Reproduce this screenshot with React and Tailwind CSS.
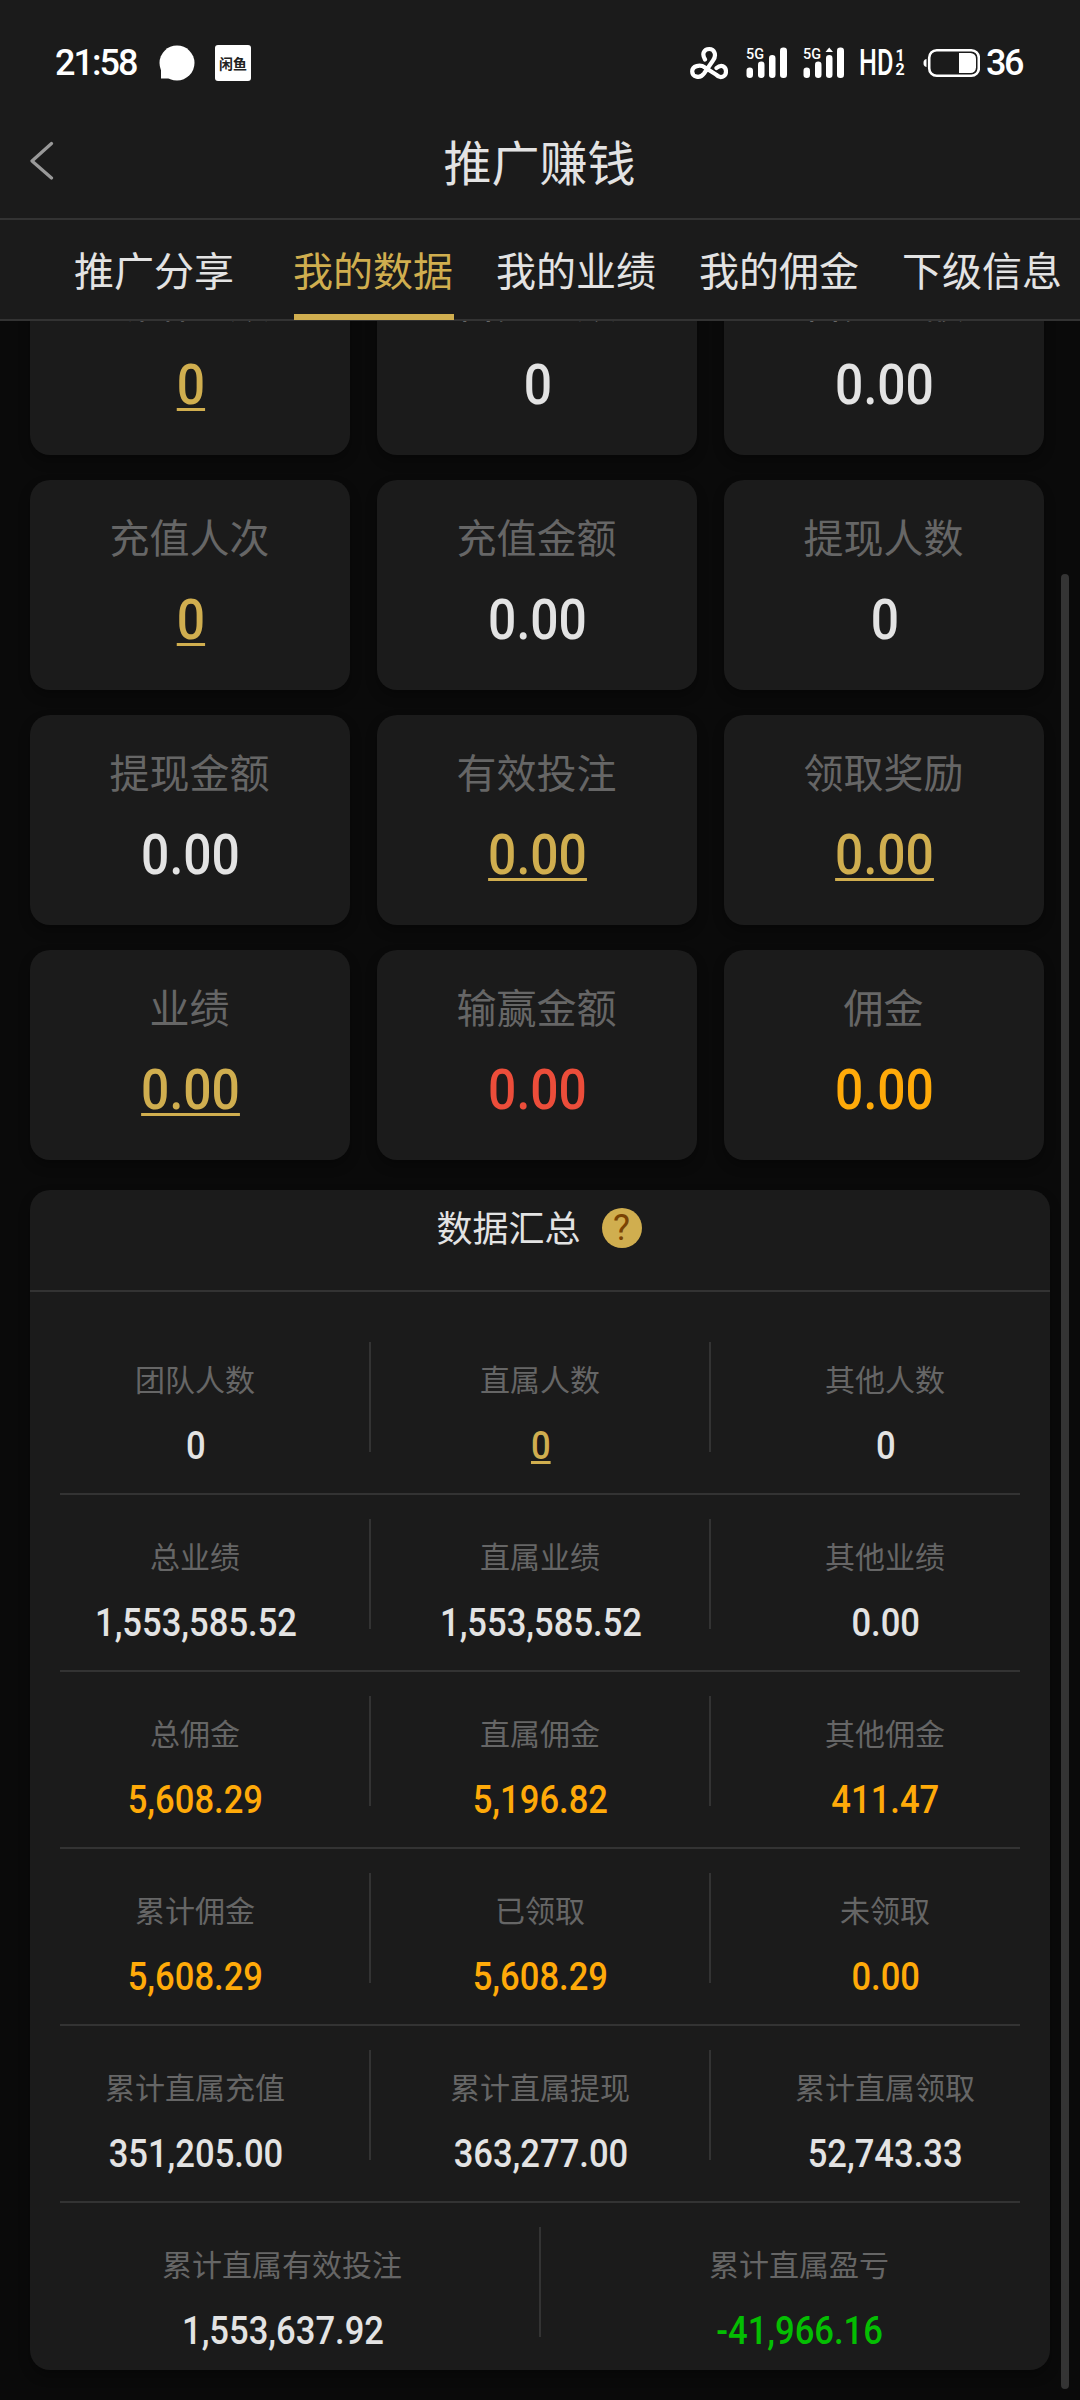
const tabs = ["推广分享", "我的数据", "我的业绩", "我的佣金", "下级信息"];

const colors = {
  plain: "text-[#e3e3e3]",
  link: "text-[#d0ae4f] underline decoration-[3px]",
  red: "text-[#ec4d3a]",
  orange: "text-[#ffaa09]",
  green: "text-[#04be02]",
};

const cards = [
  { label: "新增人数", value: "0", tone: "link" },
  { label: "首充人数", value: "0" },
  { label: "首充金额", value: "0.00" },
  { label: "充值人次", value: "0", tone: "link" },
  { label: "充值金额", value: "0.00" },
  { label: "提现人数", value: "0" },
  { label: "提现金额", value: "0.00" },
  { label: "有效投注", value: "0.00", tone: "link" },
  { label: "领取奖励", value: "0.00", tone: "link" },
  { label: "业绩", value: "0.00", tone: "link" },
  { label: "输赢金额", value: "0.00", tone: "red" },
  { label: "佣金", value: "0.00", tone: "orange" },
];

const summary = [
  [
    { label: "团队人数", value: "0" },
    { label: "直属人数", value: "0", tone: "link" },
    { label: "其他人数", value: "0" },
  ],
  [
    { label: "总业绩", value: "1,553,585.52" },
    { label: "直属业绩", value: "1,553,585.52" },
    { label: "其他业绩", value: "0.00" },
  ],
  [
    { label: "总佣金", value: "5,608.29", tone: "orange" },
    { label: "直属佣金", value: "5,196.82", tone: "orange" },
    { label: "其他佣金", value: "411.47", tone: "orange" },
  ],
  [
    { label: "累计佣金", value: "5,608.29", tone: "orange" },
    { label: "已领取", value: "5,608.29", tone: "orange" },
    { label: "未领取", value: "0.00", tone: "orange" },
  ],
  [
    { label: "累计直属充值", value: "351,205.00" },
    { label: "累计直属提现", value: "363,277.00" },
    { label: "累计直属领取", value: "52,743.33" },
  ],
];

const totals = [
  { label: "累计直属有效投注", value: "1,553,637.92" },
  { label: "累计直属盈亏", value: "-41,966.16", tone: "green" },
];

function Signal({ dual }) {
  return (
    <svg className="overflow-visible" width="41" height="32" viewBox="0 0 41 32" fill="#fff">
      <text x="0" y="11.5" fontSize="15" fontWeight="500" fontFamily="Roboto, sans-serif" textLength="18" lengthAdjust="spacingAndGlyphs">
        5G
      </text>
      <rect x="0.5" y="20.5" width="6.5" height="10.5" rx="3.2" />
      <rect x="12" y="14.5" width="6.5" height="16.5" rx="3.2" />
      <rect x="23" y="8" width="6.5" height="23" rx="3.2" />
      <rect x="34" y="0.5" width="7" height="30.5" rx="3.2" />
      {dual && <path d="M22.5 5 26.2 0.5 30 5z" />}
    </svg>
  );
}

function StatusBar() {
  return (
    <div className="flex h-[102px] items-center pt-6 text-white font-['Roboto',sans-serif]">
      <span className="ml-[55px] w-[82px] text-[36px] font-medium tracking-[-2px]">21:58</span>
      <svg className="ml-[22px]" width="36" height="36" viewBox="0 0 36 36" fill="#fff">
        <circle cx="18" cy="18" r="17.5" />
        <path d="M2 20v13.5h16z" />
      </svg>
      <span className="ml-5 flex h-9 w-9 items-center justify-center rounded-[3px] bg-white text-[14px] font-bold text-[#222] font-['Noto_Sans_CJK_SC',sans-serif]">
        闲鱼
      </span>

      <svg
        className="ml-auto"
        width="38"
        height="34"
        viewBox="0 0 38 34"
        fill="none"
        stroke="#fff"
        strokeWidth="4.2"
        strokeLinecap="round"
      >
        <path d="M15 13.5C11.5 8 14 3 19.2 3S27 9 23 14.5L14 27.5C10 33 2.2 31 2.2 25.5S10 18 15 21.5L26 28.5C30 33 36 31 36 25.5S31 18 26.5 22" />
      </svg>
      <div className="ml-[18px]"><Signal /></div>
      <div className="ml-4"><Signal dual /></div>
      <span className="ml-[15px] w-[34px] text-[36px] font-medium">
        <span className="inline-block origin-left scale-x-[0.7]">HD</span>
      </span>
      <span className="ml-[2px] flex w-[10px] flex-col items-center text-[16px] font-bold leading-[14px]">
        <span>1</span>
        <span>2</span>
      </span>
      <svg className="ml-[18px]" width="57" height="30" viewBox="0 0 57 30" fill="none">
        <path d="M3.5 11v8C1 18.5 0.5 17 0.5 15s0.5-3.500 3-4z" fill="#fff" />
        <rect x="6.2" y="2.2" width="49.6" height="25.6" rx="7.5" stroke="#fff" strokeWidth="2.6" />
        <path d="M36 5h11.5a5.5 5.5 0 0 1 5.5 5.5v9a5.5 5.5 0 0 1-5.5 5.5H36z" fill="#fff" />
      </svg>
      <span className="ml-[6px] mr-[57px] w-[37px] text-[36px] font-medium tracking-[-2.5px]">36</span>
    </div>
  );
}

function Card({ label, value, tone = "plain" }) {
  return (
    <div className="flex h-[210px] flex-col items-center rounded-[20px] bg-[#1b1b1b] pt-8 shadow-[0_6px_12px_rgba(0,0,0,0.3)]">
      <span className="pr-px text-[40px] leading-[48px] text-[#666]">{label}</span>
      <span
        className={`ml-[2px] mt-[27px] scale-x-[0.89] text-[56px] font-medium leading-[66px] underline-offset-[4px] font-['Roboto',sans-serif] ${colors[tone]}`}
      >
        {value}
      </span>
    </div>
  );
}

function Stat({ label, value, tone = "plain", className = "" }) {
  return (
    <div className={`flex h-[175px] shrink-0 flex-col items-center pt-[42px] ${className}`}>
      <span className="text-[30px] leading-[36px] text-[#666]">{label}</span>
      <span
        className={`mt-7 ml-px scale-x-[0.91] text-[38px] font-medium leading-[44px] underline-offset-[2px] font-['Roboto',sans-serif] ${colors[tone]}`}
      >
        {value}
      </span>
    </div>
  );
}

function Divider() {
  return <div className="mt-6 h-[110px] w-[2px] shrink-0 bg-[#333]" />;
}

export default function App() {
  return (
    <div className="relative flex h-[2400px] w-[1080px] flex-col overflow-hidden bg-[#0a0a0a] font-['Noto_Sans_CJK_SC',sans-serif]">
      {/* Header */}
      <header className="bg-[#1b1b1b]">
        <StatusBar />
        <div className="flex h-[118px] items-center border-b-2 border-[#333]">
          <svg className="ml-[29px]" width="26" height="40" viewBox="0 0 26 40" fill="none" stroke="#999" strokeWidth="3.2">
            <path d="M22.5 3.5 3 21l19.5 17" strokeLinecap="round" strokeLinejoin="round" />
          </svg>
          <h1 className="mr-[56px] flex-1 text-center text-[48px] leading-[56px] text-[#e3e3e3]">推广赚钱</h1>
        </div>
        <nav className="flex h-[101px] border-b-2 border-[#333] pl-[74px] text-[40px] text-[#e3e3e3]">
          {tabs.map((tab, i) => (
            <div
              key={tab}
              className={`h-[100px] w-[160px] shrink-0 whitespace-nowrap pt-[19px] leading-[60px] ${
                i === 0 ? "mr-[60px]" : "mr-[43px] -indent-px"
              } ${i === 1 ? "border-b-[6px] border-[#d0ae4f] text-[#d0ae4f]" : ""}`}
            >
              {tab}
            </div>
          ))}
        </nav>
      </header>

      <main className="flex-1 overflow-hidden">
        {/* Cards, already scrolled up a little */}
        <section className="-mt-[76px] grid grid-cols-3 gap-x-[27px] gap-y-[25px] pl-[30px] pr-9">
          {cards.map((card) => (
            <Card key={card.label} {...card} />
          ))}
        </section>

        {/* Summary */}
        <section className="mx-[30px] mt-[30px] h-[1180px] rounded-[20px] bg-[#1b1b1b] shadow-[0_6px_12px_rgba(0,0,0,0.3)]">
          <div className="flex h-[102px] items-start justify-center border-b-2 border-[#333] pt-[18px]">
            <h2 className="-mt-[2px] text-[36px] leading-10 text-[#e3e3e3]">数据汇总</h2>
            <span className="ml-[21px] mr-[2px] flex h-10 w-10 items-center justify-center rounded-full bg-[#d0ae4f] text-[36px] leading-10 text-[#7a4303] font-['Roboto',sans-serif]">
              ?
            </span>
          </div>

          <div className="pt-[26px]">
            {summary.map(([first, second, third]) => (
              <div key={first.label}>
                <div className="flex">
                  <Stat {...first} className="w-[339px] pr-[9px]" />
                  <Divider />
                  <Stat {...second} className="w-[338px]" />
                  <Divider />
                  <Stat {...third} className="w-[339px] pl-[9px]" />
                </div>
                <div className="mx-[30px] h-[2px] bg-[#333]" />
              </div>
            ))}
            <div className="flex">
              <Stat {...totals[0]} className="w-[509px] pr-[5px]" />
              <Divider />
              <Stat {...totals[1]} className="w-[509px] pl-[7px]" />
            </div>
          </div>
        </section>
      </main>

      {/* Scrollbar */}
      <div className="absolute left-[1061px] top-[574px] h-[1815px] w-2 rounded-full bg-[#343434]" />
    </div>
  );
}
